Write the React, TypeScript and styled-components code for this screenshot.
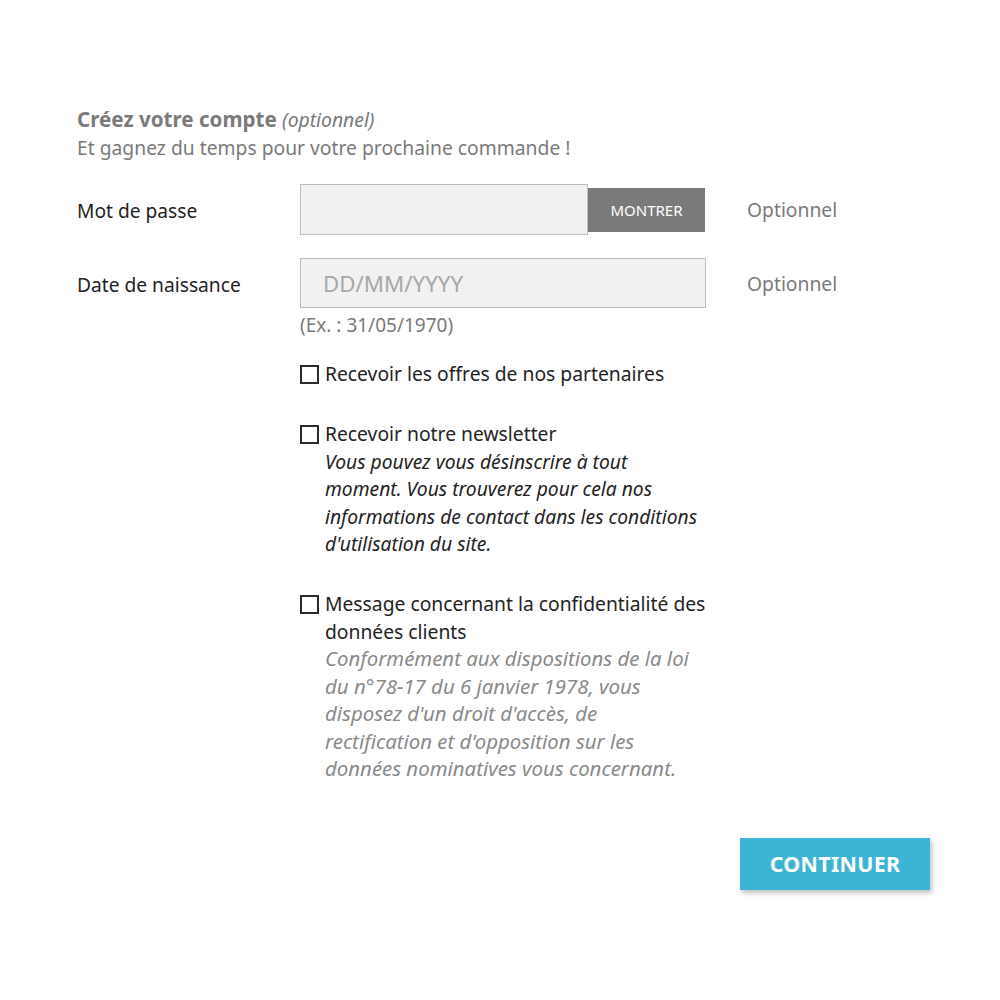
import React from 'react'
import styled, { createGlobalStyle } from 'styled-components'

const GlobalStyle = createGlobalStyle`
  body {
    margin: 0;
    background: #fff;
    font-family: 'Noto Sans', 'Open Sans', sans-serif;
    color: #232323;
  }
`

type Check = { label: string; note?: string[]; muted?: boolean }

const checks: Check[] = [
  { label: 'Recevoir les offres de nos partenaires' },
  {
    label: 'Recevoir notre newsletter',
    note: [
      'Vous pouvez vous désinscrire à tout',
      'moment. Vous trouverez pour cela nos',
      'informations de contact dans les conditions',
      "d'utilisation du site.",
    ],
  },
  {
    label: 'Message concernant la confidentialité des données clients',
    note: [
      'Conformément aux dispositions de la loi',
      'du n°78-17 du 6 janvier 1978, vous',
      "disposez d'un droit d'accès, de",
      "rectification et d'opposition sur les",
      'données nominatives vous concernant.',
    ],
    muted: true,
  },
]

const App = () => {
  return (
    <Page>
      <GlobalStyle />
      <Header>
        <Title>
          Créez votre compte <em>(optionnel)</em>
        </Title>
        <Subtitle>Et gagnez du temps pour votre prochaine commande !</Subtitle>
      </Header>

      <FieldRow>
        <Label>Mot de passe</Label>
        <InputGroup>
          <PasswordInput type="password" />
          <ShowButton type="button">MONTRER</ShowButton>
        </InputGroup>
        <Aside>Optionnel</Aside>
      </FieldRow>

      <FieldRow $gap={23}>
        <Label>Date de naissance</Label>
        <div>
          <TextInput placeholder="DD/MM/YYYY" />
        </div>
        <Aside>Optionnel</Aside>
      </FieldRow>
      <HintRow>
        <Hint>(Ex. : 31/05/1970)</Hint>
      </HintRow>

      <Checks>
        {checks.map((c) => (
          <CheckItem key={c.label}>
            <Box />
            <CheckText>
              <div>{c.label}</div>
              {c.note && (
                <Note $muted={c.muted}>
                  {c.note.map((line) => (
                    <NoteLine key={line}>{line}</NoteLine>
                  ))}
                </Note>
              )}
            </CheckText>
          </CheckItem>
        ))}
      </Checks>

      <Footer>
        <ContinueButton type="button">CONTINUER</ContinueButton>
      </Footer>
    </Page>
  )
}

export default App

const Page = styled.div`
  width: 853px;
  padding: 105px 0 80px 77px;
`

const Header = styled.div`
  color: #7a7a7a;
  line-height: 28px;
  margin-bottom: 22px;
`

const Title = styled.div`
  font-size: 20.6px;
  font-weight: 700;
  em {
    font-weight: 400;
    font-size: 19.3px;
  }
`

const Subtitle = styled.div`
  font-size: 19.3px;
`

const FieldRow = styled.div<{ $gap?: number }>`
  display: grid;
  grid-template-columns: 223px 406px auto;
  align-items: center;
  margin-top: ${(p) => p.$gap ?? 0}px;
`

const Label = styled.div`
  font-size: 19.2px;
  padding-top: 2px;
`

const Aside = styled.div`
  margin-left: 41px;
  font-size: 19.3px;
  color: #7a7a7a;
`

const InputGroup = styled.div`
  display: flex;
  align-items: center;
`

const fieldBase = `
  box-sizing: border-box;
  border: 1px solid #bdbdbd;
  background: #f1f1f1;
  outline: none;
  font-family: 'Noto Sans', 'Open Sans', sans-serif;
`

const PasswordInput = styled.input`
  ${fieldBase}
  width: 288px;
  height: 51px;
`

const ShowButton = styled.button`
  width: 117px;
  height: 44px;
  border: none;
  background: #7a7a7a;
  color: #fff;
  font-family: 'Noto Sans', 'Open Sans', sans-serif;
  font-size: 15px;
  padding: 0;
`

const TextInput = styled.input`
  ${fieldBase}
  width: 406px;
  height: 50px;
  padding: 0 22px;
  font-size: 22.3px;
  &::placeholder {
    color: #a8a8a8;
  }
`

const HintRow = styled.div`
  padding-left: 223px;
  margin-top: 5px;
`

const Hint = styled.div`
  font-size: 19px;
  line-height: 24px;
  color: #7a7a7a;
`

const Checks = styled.div`
  padding-left: 223px;
  margin-top: 23px;
  display: flex;
  flex-direction: column;
  gap: 32.5px;
`

const CheckItem = styled.div`
  display: flex;
  align-items: flex-start;
  gap: 6px;
`

const Box = styled.span`
  box-sizing: border-box;
  flex: none;
  width: 19px;
  height: 19px;
  border: 2px solid #2b2b2b;
  margin-top: 5px;
`

const CheckText = styled.div`
  width: 382px;
  font-size: 19.3px;
  line-height: 27.5px;
  color: #232323;
`

const Note = styled.div<{ $muted?: boolean }>`
  font-style: italic;
  font-size: ${(p) => (p.$muted ? '20.4px' : '19.25px')};
  color: ${(p) => (p.$muted ? '#8a8a8a' : '#232323')};
`

const NoteLine = styled.div`
  white-space: nowrap;
`

const Footer = styled.div`
  display: flex;
  justify-content: flex-end;
  margin-top: 55px;
`

const ContinueButton = styled.button`
  width: 190px;
  height: 52px;
  border: none;
  background: #3cb4d3;
  color: #fff;
  font-family: 'Noto Sans', 'Open Sans', sans-serif;
  font-weight: 700;
  font-size: 21.4px;
  letter-spacing: 0.3px;
  box-shadow: 2px 3px 5px rgba(0, 0, 0, 0.25);
`
